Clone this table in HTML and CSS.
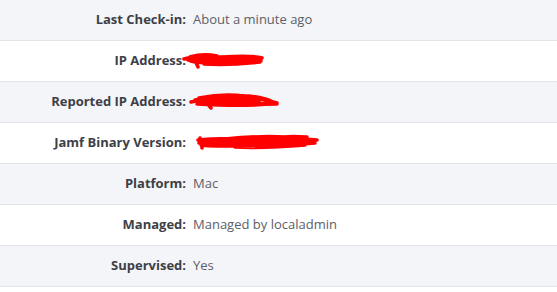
FILE: index.html
```html
<!DOCTYPE html>
<html>
<head>
<meta charset="utf-8">
<link rel="stylesheet" href="styles.css">
</head>
<body>
<div class="details">
  <div class="row alt">
    <div class="label">Last Check-in:</div>
    <div class="value">About a minute ago</div>
  </div>
  <div class="row">
    <div class="label">IP Address:</div>
    <div class="value">
      <svg class="scribble s1" width="84" height="20" viewBox="0 0 84 20">
        <path d="M2 9 C10 6 25 6 40 7 C55 6 70 5 80 8 C70 10 50 12 30 13 C20 13 10 12 6 10 C15 8 30 9 45 10 C60 10 72 9 79 11 C65 13 45 14 25 13 M12 8 L16 17 M8 7 C15 5 25 4 35 6 M20 11 C30 8 45 7 60 8 C70 9 76 10 78 12 C60 14 40 15 22 14 M26 6 L30 12 M30 9 C45 8 60 8 76 9" />
      </svg>
    </div>
  </div>
  <div class="row alt">
    <div class="label">Reported IP Address:</div>
    <div class="value">
      <svg class="scribble s2" width="92" height="20" viewBox="0 0 92 20">
        <path d="M2 11 C15 8 30 6 50 6 C65 6 78 9 88 12 C70 13 45 12 25 11 C15 11 8 10 6 9 C20 6 40 5 60 5 C70 6 78 8 84 11 M10 7 C25 4 40 3 55 5 M8 13 C25 14 45 15 65 14 C75 13 82 13 88 13 M14 8 C18 12 20 15 22 17 M30 6 C40 10 55 11 70 10 M20 9 C35 8 50 8 66 9" />
      </svg>
    </div>
  </div>
  <div class="row">
    <div class="label">Jamf Binary Version:</div>
    <div class="value">
      <svg class="scribble s3" width="126" height="20" viewBox="0 0 126 20">
        <path d="M3 8 C20 6 40 7 60 6 C80 5 100 6 122 8 C100 10 70 11 40 12 C25 12 10 12 4 11 C20 9 45 9 70 9 C90 9 108 10 120 11 C100 13 70 14 40 14 C25 14 12 14 6 13 M5 6 L7 16 M30 7 C50 5 70 4 90 5 M40 15 C60 16 85 15 110 13 M80 6 C90 4 100 4 112 5 M10 10 C40 10 80 10 116 10" />
      </svg>
    </div>
  </div>
  <div class="row alt">
    <div class="label">Platform:</div>
    <div class="value">Mac</div>
  </div>
  <div class="row">
    <div class="label">Managed:</div>
    <div class="value">Managed by localadmin</div>
  </div>
  <div class="row alt">
    <div class="label">Supervised:</div>
    <div class="value">Yes</div>
  </div>
</div>
</body>
</html>
```
FILE: styles.css
```css
html, body {
  margin: 0;
  padding: 0;
  background: #ffffff;
}
body {
  font-family: "Open Sans", "Lato", sans-serif;
  font-size: 13px;
}
.details {
  display: flex;
  flex-direction: column;
}
.row {
  display: grid;
  grid-template-columns: 186px 1fr;
  column-gap: 7px;
  align-items: center;
  height: 40px;
  border-bottom: 1px solid #e5e6ea;
  background: #ffffff;
}
.row.alt {
  background: #f4f5f8;
}
.label {
  text-align: right;
  font-weight: 700;
  color: #3d4046;
  margin-top: -2px;
}
.value {
  color: #5c6068;
  display: flex;
  align-items: center;
  margin-top: -2px;
}
.scribble {
  display: block;
}
.scribble path {
  fill: none;
  stroke: #ff0000;
  stroke-width: 3.5;
  stroke-linecap: round;
  stroke-linejoin: round;
}
.s1 {
  margin-left: -11px;
}
.s2 {
  margin-left: -4px;
}
.s3 {
  margin-left: 2px;
}
```
